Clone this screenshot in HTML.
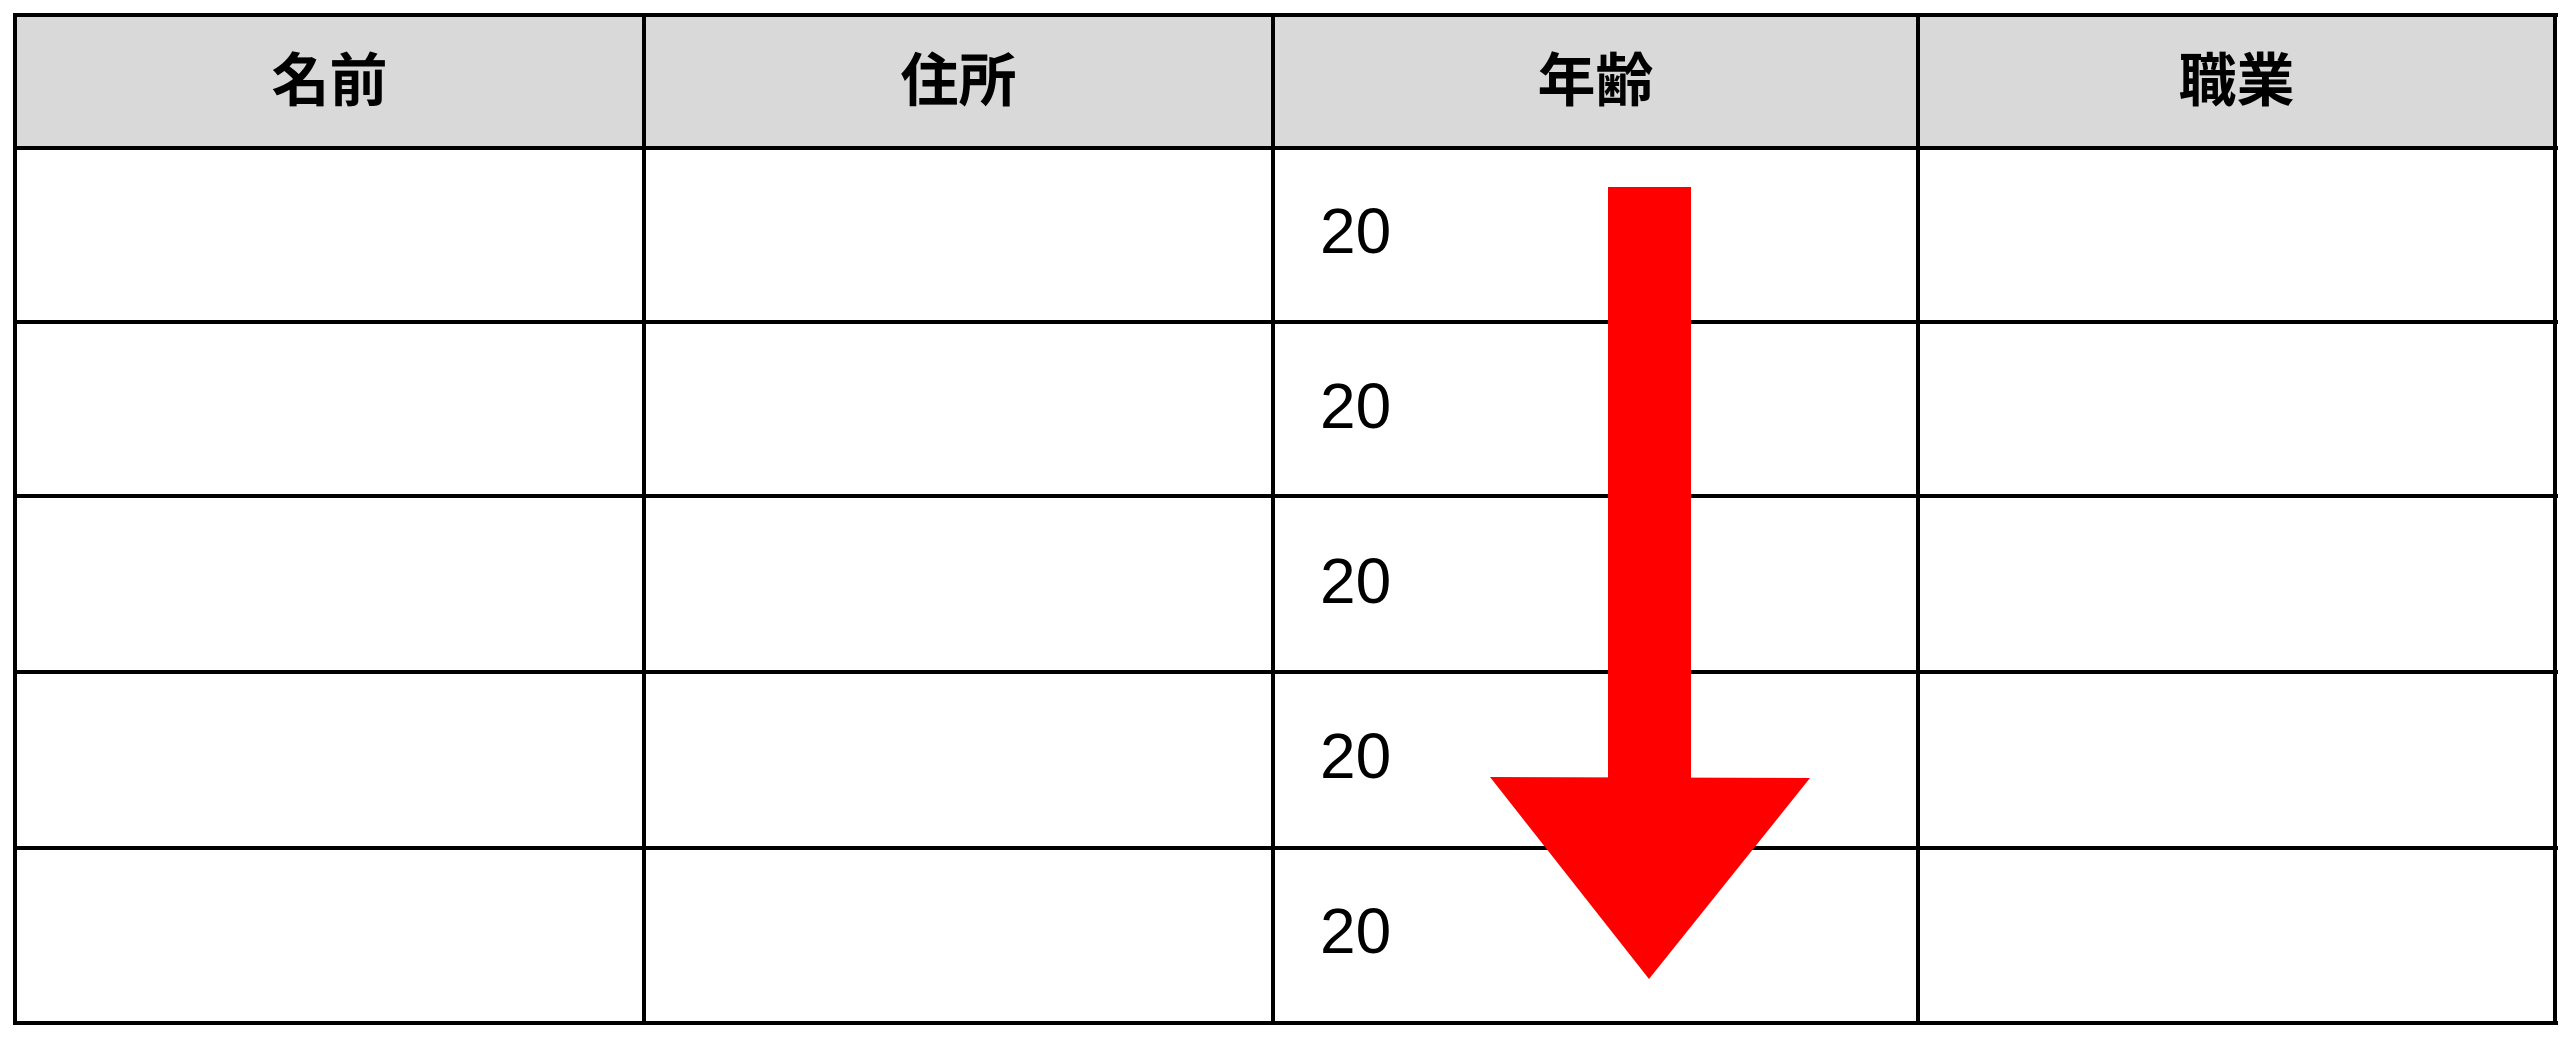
<!DOCTYPE html>
<html><head><meta charset="utf-8"><style>
body{margin:0;width:2575px;height:1050px;background:#fff;position:relative;overflow:hidden;font-family:"Liberation Sans","Noto Sans CJK JP",sans-serif}
.h{position:absolute;left:13px;width:2545px;height:4px;background:#000}
.v{position:absolute;top:13px;height:1012px;width:4px;background:#000}
.hd{position:absolute;top:15px;height:133px;background:#d9d9d9}
.t{position:absolute;top:50px;font-size:58px;font-weight:bold;line-height:64px;text-align:center}
.n{position:absolute;left:1320px;font-size:64px;line-height:64px;color:#000}
</style></head><body>
<div class="hd" style="left:15px;width:2540px"></div>
<div class="t" style="left:15px;width:629px">名前</div>
<div class="t" style="left:644px;width:629px">住所</div>
<div class="t" style="left:1273px;width:645px">年齢</div>
<div class="t" style="left:1918px;width:637px">職業</div>
<div class="h" style="top:13px"></div>
<div class="h" style="top:146px"></div>
<div class="h" style="top:320px"></div>
<div class="h" style="top:494px"></div>
<div class="h" style="top:670px"></div>
<div class="h" style="top:846px"></div>
<div class="h" style="top:1021px"></div>
<div class="v" style="left:13px"></div>
<div class="v" style="left:642px"></div>
<div class="v" style="left:1271px"></div>
<div class="v" style="left:1916px"></div>
<div class="v" style="left:2553px"></div>
<div class="n" style="top:199px">20</div>
<div class="n" style="top:374px">20</div>
<div class="n" style="top:549px">20</div>
<div class="n" style="top:724px">20</div>
<div class="n" style="top:899px">20</div>
<svg style="position:absolute;left:0;top:0" width="2575" height="1050">
<rect x="1608" y="187" width="83" height="592" fill="#ff0000"/>
<polygon points="1490,777 1810,778 1649,979" fill="#ff0000"/>
</svg>
</body></html>
